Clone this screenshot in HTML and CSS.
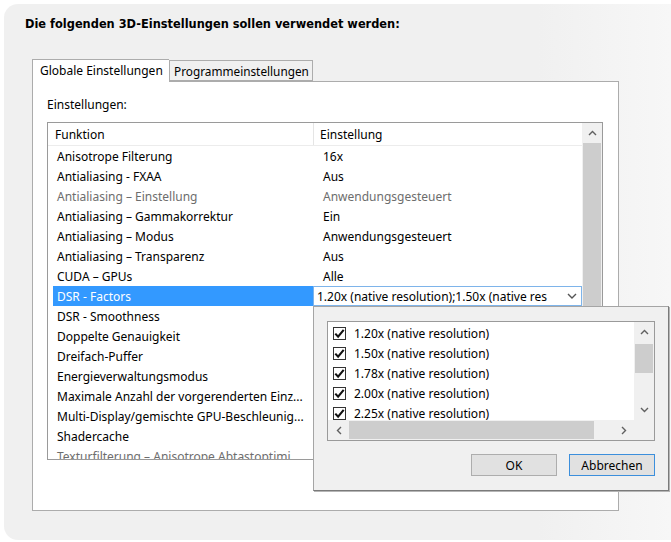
FILE: index.html
```html
<!DOCTYPE html>
<html lang="de">
<head>
<meta charset="utf-8">
<title>3D-Einstellungen</title>
<link rel="stylesheet" href="styles.css">
</head>
<body>
<div class="page">
  <div class="panel">
    <h1 class="title">Die folgenden 3D-Einstellungen sollen verwendet werden:</h1>
    <div class="tabs">
      <div class="tab tab-active">Globale Einstellungen</div>
      <div class="tab">Programmeinstellungen</div>
    </div>
    <div class="pane">
      <div class="label">Einstellungen:</div>
      <div class="listbox">
        <div class="list-main">
          <div class="list-header">
            <div class="hcol1">Funktion</div>
            <div class="hcol2">Einstellung</div>
          </div>
          <div class="rows">
            <div class="row"><div class="c1">Anisotrope Filterung</div><div class="c2">16x</div></div>
            <div class="row"><div class="c1">Antialiasing - FXAA</div><div class="c2">Aus</div></div>
            <div class="row row-disabled"><div class="c1">Antialiasing – Einstellung</div><div class="c2">Anwendungsgesteuert</div></div>
            <div class="row"><div class="c1">Antialiasing – Gammakorrektur</div><div class="c2">Ein</div></div>
            <div class="row"><div class="c1">Antialiasing – Modus</div><div class="c2">Anwendungsgesteuert</div></div>
            <div class="row"><div class="c1">Antialiasing – Transparenz</div><div class="c2">Aus</div></div>
            <div class="row"><div class="c1">CUDA – GPUs</div><div class="c2">Alle</div></div>
            <div class="row row-selected"><div class="c1">DSR - Factors</div><div class="c2 c2-combo"><div class="combo"><span class="combo-text">1.20x (native resolution);1.50x (native res</span><svg class="combo-arrow" width="10" height="6" viewBox="0 0 10 6"><polyline points="1,1 5,5 9,1" fill="none" stroke="#555" stroke-width="1.4"/></svg></div></div></div>
            <div class="row"><div class="c1">DSR - Smoothness</div><div class="c2"></div></div>
            <div class="row"><div class="c1">Doppelte Genauigkeit</div><div class="c2"></div></div>
            <div class="row"><div class="c1">Dreifach-Puffer</div><div class="c2"></div></div>
            <div class="row"><div class="c1">Energieverwaltungsmodus</div><div class="c2"></div></div>
            <div class="row"><div class="c1">Maximale Anzahl der vorgerenderten Einz...</div><div class="c2"></div></div>
            <div class="row"><div class="c1">Multi-Display/gemischte GPU-Beschleunig...</div><div class="c2"></div></div>
            <div class="row"><div class="c1">Shadercache</div><div class="c2"></div></div>
            <div class="row row-disabled"><div class="c1">Texturfilterung – Anisotrope Abtastoptimi</div><div class="c2"></div></div>
          </div>
        </div>
        <div class="vscroll">
          <div class="sb-btn"><svg width="9" height="6" viewBox="0 0 9 6"><polyline points="1,5 4.5,1.5 8,5" fill="none" stroke="#606060" stroke-width="1.4"/></svg></div>
          <div class="sb-thumb main-thumb"></div>
        </div>
      </div>
    </div>
  </div>

  <div class="popup">
    <div class="checklist">
      <div class="check-items">
        <div class="citem"><span class="cbox"><svg width="11" height="11" viewBox="0 0 11 11"><path d="M1.3 5.6 L4.1 8.6 L9.7 1.8" fill="none" stroke="#111" stroke-width="2.1"/></svg></span><span class="ctext">1.20x (native resolution)</span></div>
        <div class="citem"><span class="cbox"><svg width="11" height="11" viewBox="0 0 11 11"><path d="M1.3 5.6 L4.1 8.6 L9.7 1.8" fill="none" stroke="#111" stroke-width="2.1"/></svg></span><span class="ctext">1.50x (native resolution)</span></div>
        <div class="citem"><span class="cbox"><svg width="11" height="11" viewBox="0 0 11 11"><path d="M1.3 5.6 L4.1 8.6 L9.7 1.8" fill="none" stroke="#111" stroke-width="2.1"/></svg></span><span class="ctext">1.78x (native resolution)</span></div>
        <div class="citem"><span class="cbox"><svg width="11" height="11" viewBox="0 0 11 11"><path d="M1.3 5.6 L4.1 8.6 L9.7 1.8" fill="none" stroke="#111" stroke-width="2.1"/></svg></span><span class="ctext">2.00x (native resolution)</span></div>
        <div class="citem"><span class="cbox"><svg width="11" height="11" viewBox="0 0 11 11"><path d="M1.3 5.6 L4.1 8.6 L9.7 1.8" fill="none" stroke="#111" stroke-width="2.1"/></svg></span><span class="ctext">2.25x (native resolution)</span></div>
      </div>
      <div class="cl-vscroll">
        <div class="sb-btn"><svg width="9" height="6" viewBox="0 0 9 6"><polyline points="1,5 4.5,1.5 8,5" fill="none" stroke="#606060" stroke-width="1.4"/></svg></div>
        <div class="sb-track-v">
          <div class="cl-vthumb"></div>
        </div>
        <div class="sb-btn"><svg width="9" height="6" viewBox="0 0 9 6"><polyline points="1,1 4.5,4.5 8,1" fill="none" stroke="#606060" stroke-width="1.4"/></svg></div>
      </div>
      <div class="cl-hscroll">
        <div class="sb-btn-h"><svg width="6" height="9" viewBox="0 0 6 9"><polyline points="5,1 1.5,4.5 5,8" fill="none" stroke="#606060" stroke-width="1.4"/></svg></div>
        <div class="sb-track-h"><div class="cl-hthumb"></div></div>
        <div class="sb-btn-h"><svg width="6" height="9" viewBox="0 0 6 9"><polyline points="1,1 4.5,4.5 1,8" fill="none" stroke="#606060" stroke-width="1.4"/></svg></div>
      </div>
      <div class="cl-corner"></div>
    </div>
    <div class="buttons">
      <div class="btn">OK</div>
      <div class="btn btn-default">Abbrechen</div>
    </div>
  </div>
</div>
</body>
</html>
```

FILE: styles.css
```css
html, body {
  margin: 0;
  padding: 0;
  background: #ffffff;
}

body {
  font-family: "Noto Sans", "Open Sans", sans-serif;
  font-size: 12px;
  color: #000;
}

.page {
  position: relative;
  width: 671px;
  height: 542px;
  padding: 4px 0 0 4px;
  box-sizing: border-box;
  overflow: hidden;
}

.panel {
  height: 536px;
  border-radius: 14px 0 0 14px;
  background: linear-gradient(to right, #f0f0f0 0%, #f0f0f0 80%, #f7f7f7 100%);
  padding-top: 12px;
  box-sizing: border-box;
}

.title {
  margin: 0 0 0 21px;
  font-family: "DejaVu Sans", sans-serif;
  font-weight: bold;
  font-size: 11.4px;
  line-height: 16px;
  height: 16px;
  color: #000;
}

.tabs {
  display: flex;
  align-items: flex-end;
  margin: 27px 0 -1px 28px;
  height: 23px;
  position: relative;
  z-index: 2;
}

.tab {
  box-sizing: border-box;
  padding: 0 0 0 4px;
  border: 1px solid #acacac;
  background: #f0f0f0;
  color: #000;
  white-space: nowrap;
  overflow: hidden;
}

.tab-active {
  height: 23px;
  width: 137px;
  padding-left: 7px;
  background: #ffffff;
  line-height: 22px;
  border-right: none;
  border-bottom: none;
}

.tab:not(.tab-active) {
  width: 144px;
  height: 21px;
  margin-bottom: 1px;
  line-height: 20px;
  font-size: 11.8px;
}

.pane {
  position: relative;
  z-index: 1;
  margin-left: 28px;
  width: 587px;
  height: 430px;
  box-sizing: border-box;
  border: 1px solid #acacac;
  background: #ffffff;
  padding: 15px 0 0 14px;
}

.label {
  line-height: 16px;
  height: 16px;
}

.listbox {
  margin-top: 9px;
  width: 556px;
  height: 338px;
  box-sizing: border-box;
  border: 1px solid #9a9a9a;
  display: flex;
  overflow: hidden;
}

.list-main {
  flex: 1;
  overflow: hidden;
}

.list-header {
  display: flex;
  height: 22px;
  border-bottom: 1px solid #ececec;
  line-height: 24px;
}

.hcol1 {
  width: 266px;
  box-sizing: border-box;
  padding-left: 7px;
  border-right: 1px solid #e5e5e5;
}

.hcol2 {
  flex: 1;
  padding-left: 6px;
}

.rows {
  padding-left: 5px;
}

.row {
  display: flex;
  height: 20px;
  line-height: 22px;
  white-space: nowrap;
}

.c1 {
  width: 260px;
  flex: none;
  box-sizing: border-box;
  padding-left: 4px;
  overflow: hidden;
}

.c2 {
  flex: 1;
  padding-left: 10px;
  overflow: hidden;
}

.row-disabled {
  color: #6d6d6d;
}

.row-selected .c1 {
  background: #3399ff;
  color: #ffffff;
}

.c2-combo {
  padding-left: 0;
}

.combo {
  box-sizing: border-box;
  height: 20px;
  border: 1px solid #7eb4ea;
  display: flex;
  align-items: center;
  padding-left: 3px;
  padding-right: 4px;
  line-height: 18px;
  background: #ffffff;
}

.combo-text {
  flex: 1;
  overflow: hidden;
  padding-top: 2px;
}

.combo-arrow {
  flex: none;
  margin-left: 4px;
}

.vscroll {
  width: 20px;
  flex: none;
  background: #f0f0f0;
  display: flex;
  flex-direction: column;
}

.sb-btn {
  height: 20px;
  flex: none;
  display: flex;
  align-items: center;
  justify-content: center;
}

.main-thumb {
  height: 260px;
  margin: 0 1px;
  background: #cdcdcd;
}

/* popup */
.popup {
  position: absolute;
  left: 313px;
  top: 306px;
  width: 356px;
  height: 185px;
  box-sizing: border-box;
  background: #f0f0f0;
  border: 1px solid #a5a5a5;
  border-right-color: #7a7a7a;
  border-bottom-color: #7a7a7a;
  box-shadow: 1px 1px 0 #b5b5b5;
  padding: 14px 0 0 13px;
  z-index: 5;
}

.checklist {
  width: 328px;
  height: 120px;
  box-sizing: border-box;
  border: 1px solid #9a9a9a;
  background: #ffffff;
  display: grid;
  grid-template-columns: 1fr 20px;
  grid-template-rows: 1fr 20px;
}

.check-items {
  overflow: hidden;
  padding-top: 1px;
}

.citem {
  display: flex;
  align-items: center;
  height: 20px;
  padding-left: 5px;
  white-space: nowrap;
}

.cbox {
  box-sizing: border-box;
  width: 13px;
  height: 13px;
  border: 1px solid #333333;
  background: #ffffff;
  display: flex;
  align-items: center;
  justify-content: center;
  flex: none;
  margin-right: 8px;
}

.ctext {
  line-height: 20px;
  padding-top: 2px;
}

.cl-vscroll {
  background: #f0f0f0;
  display: flex;
  flex-direction: column;
}

.sb-track-v {
  flex: 1;
  padding-top: 2px;
}

.cl-vthumb {
  height: 29px;
  margin: 0 1px;
  background: #cdcdcd;
}

.cl-hscroll {
  background: #f0f0f0;
  display: flex;
}

.sb-btn-h {
  width: 21px;
  flex: none;
  display: flex;
  align-items: center;
  justify-content: center;
}

.sb-track-h {
  flex: 1;
  padding: 1px 0;
}

.cl-hthumb {
  height: 18px;
  width: 245px;
  background: #cdcdcd;
}

.cl-corner {
  background: #f0f0f0;
}

.buttons {
  display: flex;
  justify-content: flex-end;
  gap: 12px;
  width: 328px;
  margin-top: 13px;
}

.btn {
  box-sizing: border-box;
  width: 86px;
  height: 22px;
  border: 1px solid #adadad;
  background: #e1e1e1;
  text-align: center;
  line-height: 22px;
}

.btn-default {
  border-color: #3c8fdc;
}
```
